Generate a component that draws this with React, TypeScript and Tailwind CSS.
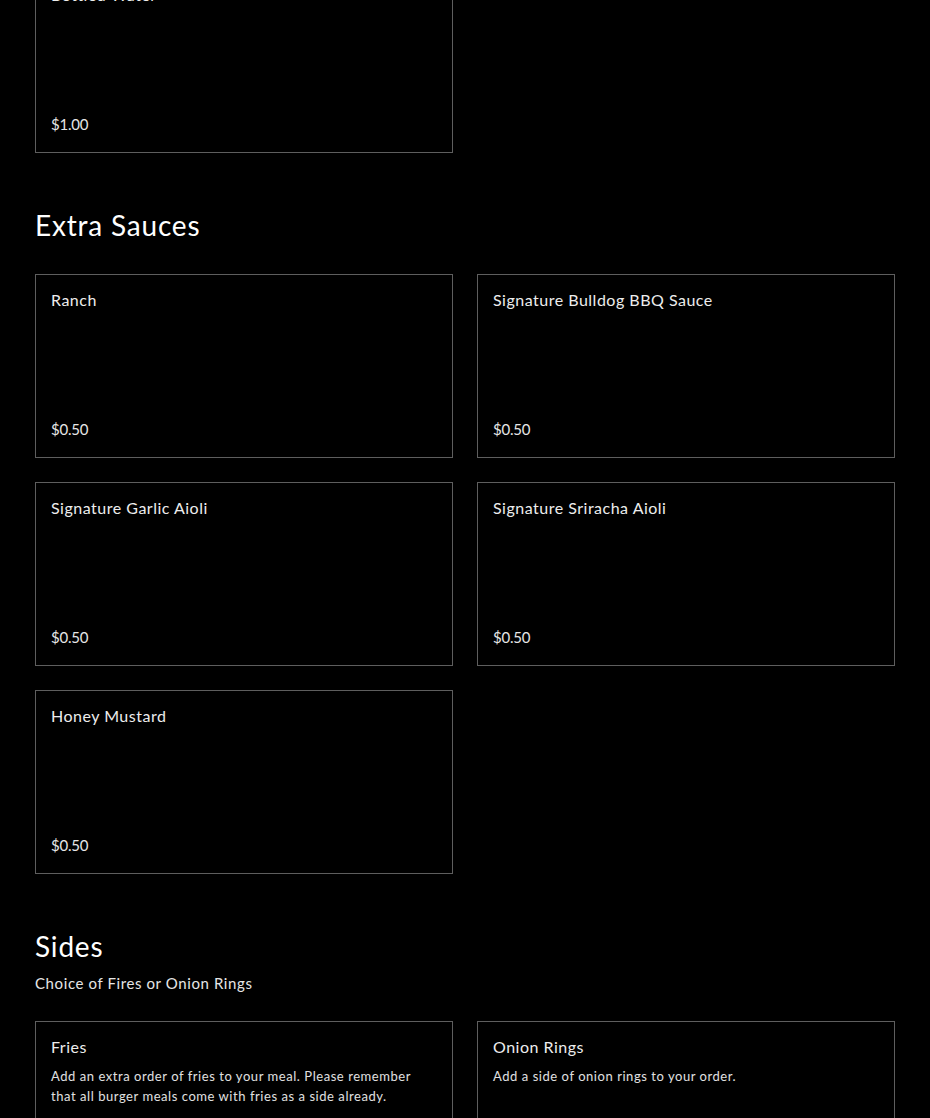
type Item = {
  name: string;
  price?: string;
  description?: string;
};

const drinks: Item[] = [{ name: "Bottled Water", price: "$1.00" }];

const sauces: Item[] = [
  { name: "Ranch", price: "$0.50" },
  { name: "Signature Bulldog BBQ Sauce", price: "$0.50" },
  { name: "Signature Garlic Aioli", price: "$0.50" },
  { name: "Signature Sriracha Aioli", price: "$0.50" },
  { name: "Honey Mustard", price: "$0.50" }
];

const sides: Item[] = [
  {
    name: "Fries",
    description: "Add an extra order of fries to your meal. Please remember that all burger meals come with fries as a side already."
  },
  { name: "Onion Rings", description: "Add a side of onion rings to your order." }
];

export default function App() {
  return (
    <div className="h-[1118px] overflow-hidden bg-black px-[35px] font-['Lato','Open_Sans',sans-serif] text-[#ececec]">
      <div className="-mt-[31px] grid grid-cols-2 gap-6">
        {drinks.map((item) => (
          <MenuCard key={item.name} item={item} />
        ))}
      </div>

      <Section title="Extra Sauces">
        {sauces.map((item) => (
          <MenuCard key={item.name} item={item} />
        ))}
      </Section>

      <Section title="Sides" subtitle="Choice of Fires or Onion Rings">
        {sides.map((item) => (
          <MenuCard key={item.name} item={item} />
        ))}
      </Section>
    </div>
  );
}

function Section({ title, subtitle, children }: { title: string; subtitle?: string; children: React.ReactNode }) {
  return (
    <section className="mt-[55px]">
      <h2 className="text-[28px] leading-[34px] font-normal tracking-[0.8px] text-white">{title}</h2>
      {subtitle ? <p className="mt-[9px] text-[15px] leading-[22px] tracking-[0.6px] text-[#e6e6e6]">{subtitle}</p> : null}
      <div className={subtitle ? "mt-[27px] grid grid-cols-2 gap-6" : "mt-[32px] grid grid-cols-2 gap-6"}>{children}</div>
    </section>
  );
}

function MenuCard({ item }: { item: Item }) {
  return (
    <div className="flex h-[184px] flex-col justify-between border border-[#5e5e5e] px-[15px] pt-[14px] pb-[18px]">
      <div>
        <h3 className="text-[16px] leading-[22px] font-normal tracking-[0.5px] text-[#ededed]">{item.name}</h3>
        {item.description ? (
          <p className="mt-[8px] pr-4 text-[13px] leading-[20px] tracking-[0.55px] text-[#e0e0e0]">{item.description}</p>
        ) : null}
      </div>
      {item.price ? (
        <p className="text-[15px] leading-[20px] tracking-[-0.2px] text-[#e6e6e6]">{item.price}</p>
      ) : null}
    </div>
  );
}
